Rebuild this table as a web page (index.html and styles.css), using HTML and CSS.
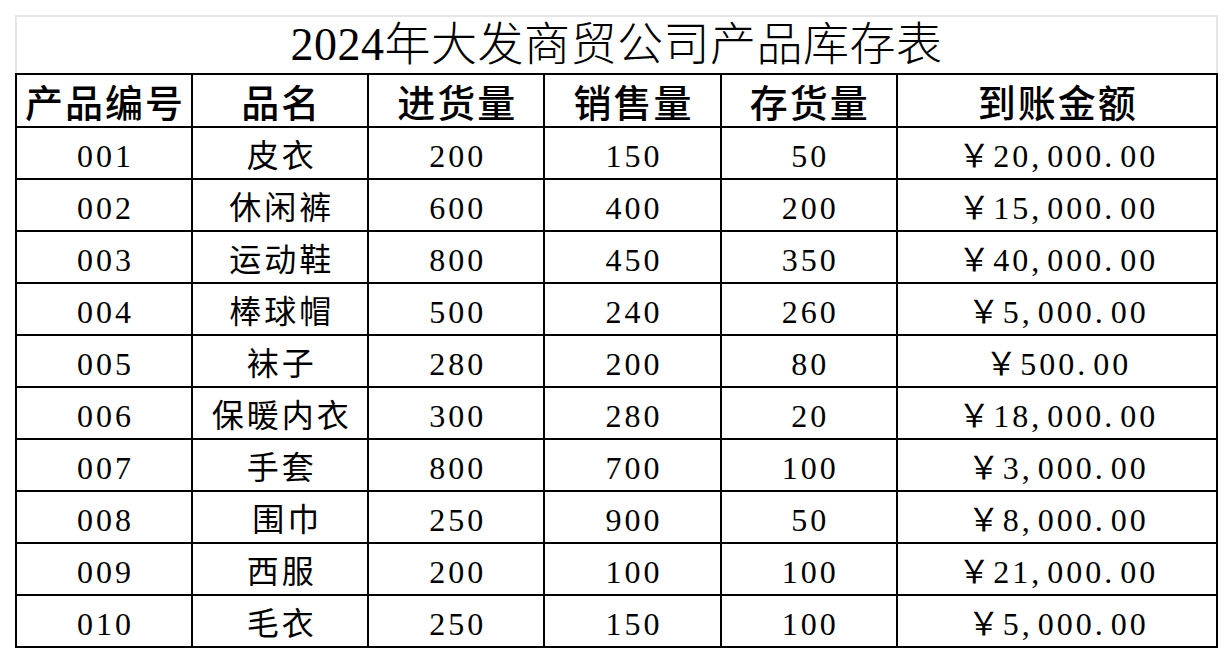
FILE: index.html
```html
<!DOCTYPE html>
<html lang="zh-CN">
<head>
<meta charset="utf-8">
<title>2024年大发商贸公司产品库存表</title>
<link rel="stylesheet" href="styles.css">
</head>
<body>
<div class="sheet">
  <div class="title">2024年大发商贸公司产品库存表</div>
  <table class="grid">
    <colgroup>
      <col class="c-n"><col class="c-n"><col class="c-n"><col class="c-n"><col class="c-n"><col class="c-w">
    </colgroup>
    <thead>
      <tr><th>产品编号</th><th>品名</th><th>进货量</th><th>销售量</th><th>存货量</th><th>到账金额</th></tr>
    </thead>
    <tbody>
      <tr><td>001</td><td>皮衣</td><td>200</td><td>150</td><td>50</td><td>￥20<span class="p">,</span>000<span class="p">.</span>00</td></tr>
      <tr><td>002</td><td>休闲裤</td><td>600</td><td>400</td><td>200</td><td>￥15<span class="p">,</span>000<span class="p">.</span>00</td></tr>
      <tr><td>003</td><td>运动鞋</td><td>800</td><td>450</td><td>350</td><td>￥40<span class="p">,</span>000<span class="p">.</span>00</td></tr>
      <tr><td>004</td><td>棒球帽</td><td>500</td><td>240</td><td>260</td><td>￥5<span class="p">,</span>000<span class="p">.</span>00</td></tr>
      <tr><td>005</td><td>袜子</td><td>280</td><td>200</td><td>80</td><td>￥500<span class="p">.</span>00</td></tr>
      <tr><td>006</td><td>保暖内衣</td><td>300</td><td>280</td><td>20</td><td>￥18<span class="p">,</span>000<span class="p">.</span>00</td></tr>
      <tr><td>007</td><td>手套</td><td>800</td><td>700</td><td>100</td><td>￥3<span class="p">,</span>000<span class="p">.</span>00</td></tr>
      <tr><td>008</td><td class="pre"> 围巾</td><td>250</td><td>900</td><td>50</td><td>￥8<span class="p">,</span>000<span class="p">.</span>00</td></tr>
      <tr><td>009</td><td>西服</td><td>200</td><td>100</td><td>100</td><td>￥21<span class="p">,</span>000<span class="p">.</span>00</td></tr>
      <tr><td>010</td><td>毛衣</td><td>250</td><td>150</td><td>100</td><td>￥5<span class="p">,</span>000<span class="p">.</span>00</td></tr>
    </tbody>
  </table>
</div>
</body>
</html>
```
FILE: styles.css
```css
html, body {
  margin: 0;
  padding: 0;
  background: #ffffff;
}

.sheet {
  padding: 15px 0 0 15px;
  width: 1204px;
}

.title {
  box-sizing: border-box;
  width: 1203px;
  height: 58px;
  border: 2px solid #e6e6e6;
  border-bottom: none;
  text-align: center;
  font-family: "Liberation Serif", "Noto Sans CJK SC", serif;
  font-size: 46px;
  font-weight: 300;
  letter-spacing: 0.5px;
  line-height: 56px;
  color: #000;
}

.grid {
  border-collapse: collapse;
  table-layout: fixed;
  width: 1203px;
  border: 2px solid #000;
}

.c-n { width: 176px; }
.c-w { width: 320px; }

.grid th,
.grid td {
  border: 2px solid #000;
  padding: 0;
  text-align: center;
  vertical-align: middle;
  color: #000;
  overflow: hidden;
  white-space: nowrap;
}

.grid th {
  height: 51px;
  font-family: "Noto Sans CJK SC", sans-serif;
  font-weight: 500;
  font-size: 38px;
  letter-spacing: 2px;
  line-height: 40px;
  padding-left: 2px;
}

.grid td {
  height: 52px;
  font-family: "Liberation Serif", "Noto Sans CJK SC", serif;
  font-size: 32px;
  letter-spacing: 3px;
  line-height: 36px;
  padding-top: 5px;
  padding-left: 3px;
  box-sizing: border-box;
}

.grid td .p {
  display: inline-block;
  width: 16px;
  text-align: left;
}

.grid td.pre {
  white-space: pre;
}
```
